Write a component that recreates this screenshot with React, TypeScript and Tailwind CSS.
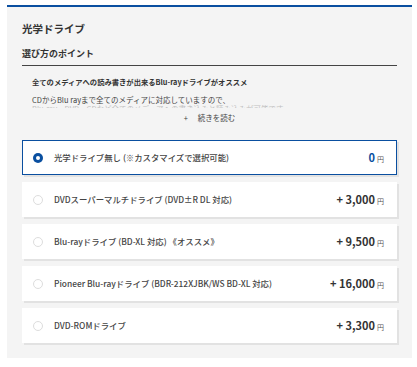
import React, { useState } from "react";

interface Option {
  id: string;
  label: React.ReactNode;
  price: string;
}

const options: Option[] = [
  { id: "none", label: "光学ドライブ無し (※カスタマイズで選択可能)", price: "0" },
  { id: "dvd", label: "DVDスーパーマルチドライブ (DVD±R DL 対応)", price: "+ 3,000" },
  { id: "bd", label: "Blu-rayドライブ (BD-XL 対応) 《オススメ》", price: "+ 9,500" },
  { id: "pioneer", label: "Pioneer Blu-rayドライブ (BDR-212XJBK/WS BD-XL 対応)", price: "+ 16,000" },
  { id: "rom", label: "DVD-ROMドライブ", price: "+ 3,300" },
];

const App = () => {
  const [selected, setSelected] = useState("none");

  return (
    <div
      className="w-[417px] h-[367px] bg-white pt-[5px] pl-[7px] pr-[5px] text-[#333]"
      style={{ fontFamily: '"Noto Sans CJK JP", "Noto Sans", sans-serif' }}
    >
      <div className="border-t-2 border-[#0a4fa0] bg-[#f4f4f4] px-[15px] pt-[15px] pb-[15px]">
        <h2 className="text-[10.5px] font-bold leading-[14px]">光学ドライブ</h2>
        <div className="mt-[12px] border-b border-[#444] pb-[5px]">
          <h3 className="text-[9px] font-bold leading-[12px]">選び方のポイント</h3>
        </div>
        <div className="px-[10px] pt-[11px]">
          <p className="text-[7.3px] font-bold leading-[10px]">
            全てのメディアへの読み書きが出来るBlu-rayドライブがオススメ
          </p>
          <p className="mt-[8px] whitespace-nowrap text-[7.5px] leading-[10px] text-[#444]">
            CDからBlu rayまで全てのメディアに対応していますので、
          </p>
          {/* faded preview of the hidden text */}
          <div className="h-[3px] overflow-hidden opacity-30">
            <p className="whitespace-nowrap text-[7.5px] leading-[8px] text-[#444]">
              Blu-ray、DVD、CDなど全てのメディアへの書き込みと読み込みが可能です。
            </p>
          </div>
          <div className="mt-[5px] text-center text-[7.5px] leading-[10px] text-[#444]">
            <span className="mr-[10px]">+</span>続きを読む
          </div>
        </div>
        <div className="mt-[17px] flex flex-col gap-[7px]">
          {options.map((o) => {
            const active = selected === o.id;
            return (
              <button
                key={o.id}
                onClick={() => setSelected(o.id)}
                className={`flex h-[35px] items-center bg-white pl-[10px] pr-[12px] text-left shadow-[2px_2px_0_#e2e2e2] ${
                  active ? "border border-[#0a4fa0]" : "border border-white"
                }`}
              >
                <span
                  className={`flex h-[10px] w-[10px] items-center justify-center rounded-full ${
                    active ? "bg-[#0a4fa0]" : "border border-[#ddd] bg-white"
                  }`}
                >
                  {active && <span className="h-[4px] w-[4px] rounded-full bg-white" />}
                </span>
                <span className="ml-[11px] flex-1 text-[8.4px] font-medium text-[#444]">
                  {o.label}
                </span>
                <span
                  className={`text-[11px] font-bold ${active ? "text-[#0a4fa0]" : "text-[#333]"}`}
                >
                  {o.price}
                  <span className="ml-[2px] text-[7px] font-normal text-[#555]">円</span>
                </span>
              </button>
            );
          })}
        </div>
      </div>
    </div>
  );
};

export default App;
